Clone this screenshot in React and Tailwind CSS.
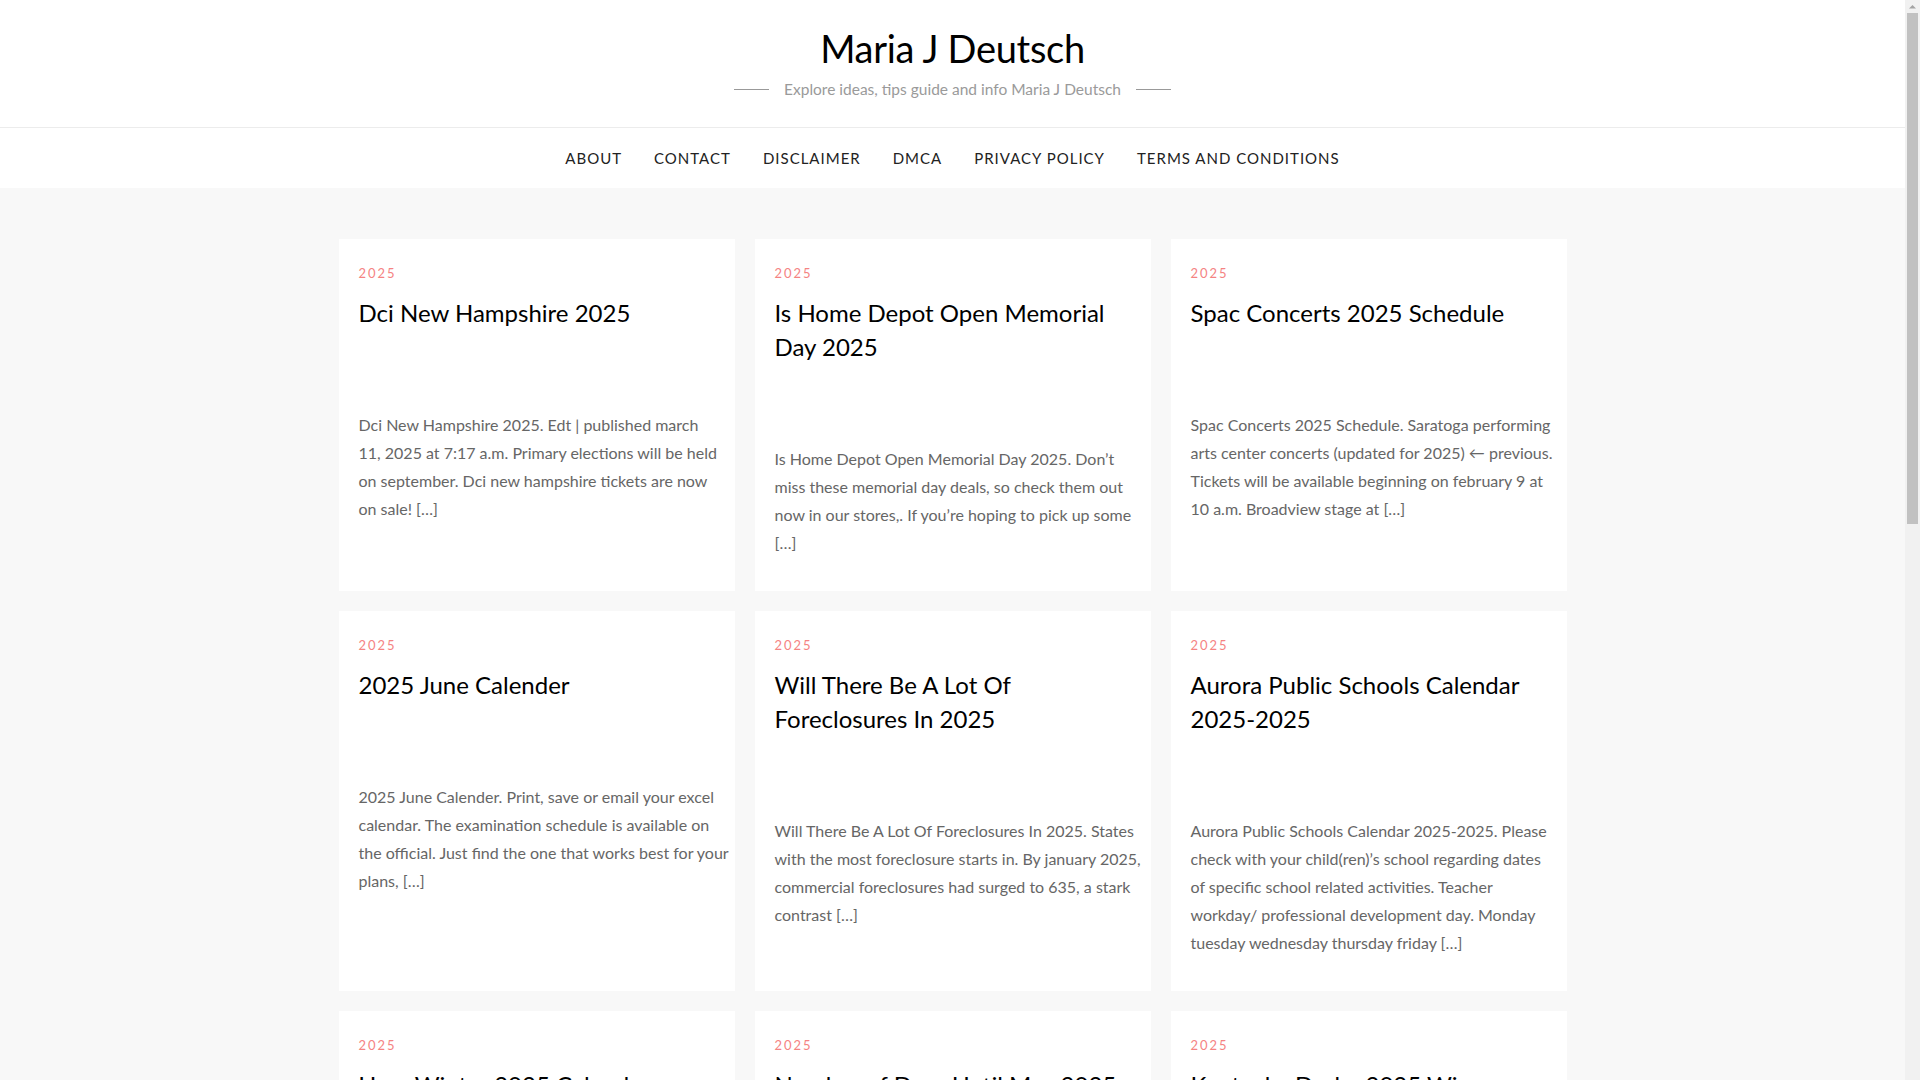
import React from 'react';

const NAV = ['About', 'Contact', 'Disclaimer', 'DMCA', 'Privacy Policy', 'Terms and Conditions'];

const POSTS = [
  {
    title: 'Dci New Hampshire 2025',
    lines: [
      'Dci New Hampshire 2025. Edt | published march',
      '11, 2025 at 7:17 a.m. Primary elections will be held',
      'on september. Dci new hampshire tickets are now',
      'on sale! […]',
    ],
  },
  {
    title: 'Is Home Depot Open Memorial Day 2025',
    lines: [
      'Is Home Depot Open Memorial Day 2025. Don’t',
      'miss these memorial day deals, so check them out',
      'now in our stores,. If you’re hoping to pick up some',
      '[…]',
    ],
  },
  {
    title: 'Spac Concerts 2025 Schedule',
    lines: [
      'Spac Concerts 2025 Schedule. Saratoga performing',
      'arts center concerts (updated for 2025) ← previous.',
      'Tickets will be available beginning on february 9 at',
      '10 a.m. Broadview stage at […]',
    ],
  },
  {
    title: '2025 June Calender',
    lines: [
      '2025 June Calender. Print, save or email your excel',
      'calendar. The examination schedule is available on',
      'the official. Just find the one that works best for your',
      'plans, […]',
    ],
  },
  {
    title: 'Will There Be A Lot Of Foreclosures In 2025',
    lines: [
      'Will There Be A Lot Of Foreclosures In 2025. States',
      'with the most foreclosure starts in. By january 2025,',
      'commercial foreclosures had surged to 635, a stark',
      'contrast […]',
    ],
  },
  {
    title: 'Aurora Public Schools Calendar 2025-2025',
    lines: [
      'Aurora Public Schools Calendar 2025-2025. Please',
      'check with your child(ren)’s school regarding dates',
      'of specific school related activities. Teacher',
      'workday/ professional development day. Monday',
      'tuesday wednesday thursday friday […]',
    ],
  },
  {
    title: 'Ucsc Winter 2025 Calendar',
    lines: ['Ucsc Winter 2025 Calendar. Find the dates for the', 'quarter and final exams […]'],
  },
  {
    title: 'Number of Days Until May 2025',
    lines: ['Number of Days Until May 2025. Count down the', 'days left until the month starts […]'],
  },
  {
    title: 'Kentucky Derby 2025 Winner',
    lines: ['Kentucky Derby 2025 Winner. Everything about the', 'race held in louisville […]'],
  },
];

function PostCard({ post }) {
  return (
    <article className="bg-white px-[20px] pt-[24px] pb-[34px]">
      <a href="#" className="block text-[13px] leading-[20px] tracking-[2px] text-[#f58383]">
        2025
      </a>
      <h2 className="mt-[13px] text-[24px] leading-[34px] font-normal text-black">
        <a href="#">{post.title}</a>
      </h2>
      <p className="mt-[81px] text-[16px] leading-[28px] text-[#666]">
        {post.lines.map((line, i) => (
          <span key={i} className="block whitespace-nowrap">
            {line}
          </span>
        ))}
      </p>
    </article>
  );
}

// browser scrollbar as it shows in the screenshot
function ScrollTrack() {
  return (
    <aside className="w-[15px] shrink-0 bg-[#f1f1f1] flex flex-col items-center">
      <svg width="15" height="13" viewBox="0 0 15 13" className="shrink-0">
        <path d="M4 8.5 L7.5 5 L11 8.5 Z" fill="#a3a3a3" />
      </svg>
      <div className="w-[11px] h-[511px] bg-[#c1c1c1]" />
    </aside>
  );
}

export default function App() {
  return (
    <div className="flex h-screen overflow-hidden font-['Lato','Open_Sans',sans-serif] text-[#111]">
      <div className="flex-1 min-w-0 bg-[#f8f8f8]">
        <header className="bg-white border-b border-[#ececec]">
          <div className="flex flex-col items-center pt-[23px] h-[127px]">
            <h1 className="text-[38px] leading-[50px] font-normal text-black tracking-[-0.3px]">
              Maria J Deutsch
            </h1>
            <div className="flex items-center gap-[15px] mt-[4px]">
              <span className="w-[35px] h-px bg-[#999]" />
              <p className="text-[15.5px] leading-[24px] text-[#9a9a9a]">
                Explore ideas, tips guide and info Maria J Deutsch
              </p>
              <span className="w-[35px] h-px bg-[#999]" />
            </div>
          </div>
        </header>

        <nav className="bg-white h-[60px] flex items-center justify-center">
          <ul className="flex items-center gap-[32px]">
            {NAV.map((item) => (
              <li key={item}>
                <a href="#" className="uppercase text-[15px] tracking-[1px] text-[#222]">
                  {item}
                </a>
              </li>
            ))}
          </ul>
        </nav>

        <main className="w-[1228px] mx-auto pt-[51px] pb-[60px]">
          <div className="grid grid-cols-3 gap-[20px]">
            {POSTS.map((post) => (
              <PostCard key={post.title} post={post} />
            ))}
          </div>
        </main>
      </div>
      <ScrollTrack />
    </div>
  );
}
